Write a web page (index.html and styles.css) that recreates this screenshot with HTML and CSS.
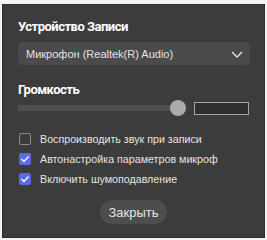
FILE: index.html
```html
<!DOCTYPE html>
<html lang="ru">
<head>
    <meta charset="UTF-8">
    <title>Устройство Записи</title>
    <link rel="stylesheet" href="styles.css">
</head>
<body>
    <div class="panel">
        <h2 class="section-title">Устройство Записи</h2>
        <div class="select">
            <span>Микрофон (Realtek(R) Audio)</span>
            <svg class="chevron" width="12" height="7" viewBox="0 0 12 7">
                <path d="M1 1 L6 6 L11 1" fill="none" stroke="#e8e8e8" stroke-width="1.3"/>
            </svg>
        </div>

        <h2 class="section-title volume-title">Громкость</h2>
        <div class="volume-row">
            <div class="track">
                <div class="thumb"></div>
            </div>
            <div class="value-box"></div>
        </div>

        <div class="options">
            <label class="option">
                <span class="box"></span>
                Воспроизводить звук при записи
            </label>
            <label class="option">
                <span class="box checked">
                    <svg width="10" height="8" viewBox="0 0 10 8"><path d="M1.5 4 L4 6.5 L8.5 1.5" fill="none" stroke="#fff" stroke-width="1.3"/></svg>
                </span>
                Автонастройка параметров микроф
            </label>
            <label class="option">
                <span class="box checked">
                    <svg width="10" height="8" viewBox="0 0 10 8"><path d="M1.5 4 L4 6.5 L8.5 1.5" fill="none" stroke="#fff" stroke-width="1.3"/></svg>
                </span>
                Включить шумоподавление
            </label>
        </div>

        <div class="footer">
            <button class="close-btn">Закрыть</button>
        </div>
    </div>
</body>
</html>
```

FILE: styles.css
```css
:root {
    --panel-bg: #3c3c3c;
    --field-bg: #4a4a4a;
    --text: #e4e4e4;
    --accent: #5b6ae6;
}

body {
    margin: 0;
    background-color: #f4f4f4;
    font-family: 'Liberation Sans', Arial, sans-serif;
}

.panel {
    margin: 4px 2px 0 2px;
    width: 263px;
    height: 234px;
    box-sizing: border-box;
    background-color: var(--panel-bg);
    border: 1px solid #2e2e2e;
    padding: 14px 15px 0 15px;
    color: var(--text);
}

.section-title {
    margin: 0;
    font-family: Roboto, 'Liberation Sans', sans-serif;
    font-size: 13px;
    font-weight: bold;
    letter-spacing: -0.5px;
    color: #fff;
    line-height: 16px;
}

.select {
    margin-top: 7px;
    height: 23px;
    width: 232px;
    background-color: var(--field-bg);
    border-radius: 4px;
    display: flex;
    align-items: center;
    justify-content: space-between;
    padding: 0 7px 0 8px;
    box-sizing: border-box;
    font-size: 11px;
}

.chevron {
    margin-top: 1px;
}

.volume-title {
    margin-top: 17px;
}

.volume-row {
    margin-top: 1px;
    display: flex;
    align-items: center;
    gap: 16px;
    height: 18px;
}

.track {
    position: relative;
    width: 161px;
    height: 6px;
    background-color: #4f4f4f;
}

.thumb {
    position: absolute;
    right: -8px;
    top: -5px;
    width: 16px;
    height: 16px;
    border-radius: 50%;
    background-color: #aaaaaa;
}

.value-box {
    width: 55px;
    height: 13px;
    box-sizing: border-box;
    border: 1px solid #a3a3a3;
    background-color: #2f2f2f;
}

.options {
    margin-top: 16px;
    display: flex;
    flex-direction: column;
    gap: 8px;
}

.option {
    display: flex;
    align-items: center;
    gap: 9px;
    font-size: 10.7px;
    line-height: 12px;
    padding-left: 1px;
}

.box {
    width: 12px;
    height: 12px;
    box-sizing: border-box;
    border: 1px solid #8a8a8a;
    border-radius: 2px;
    display: flex;
    align-items: center;
    justify-content: center;
}

.box.checked {
    border: none;
    background-color: var(--accent);
}

.footer {
    margin-top: 15px;
    display: flex;
    justify-content: center;
}

.close-btn {
    height: 24px;
    padding: 0 8px;
    border: none;
    border-radius: 12px;
    background-color: #4d4d4d;
    color: var(--text);
    font-family: inherit;
    font-size: 13px;
}
```
